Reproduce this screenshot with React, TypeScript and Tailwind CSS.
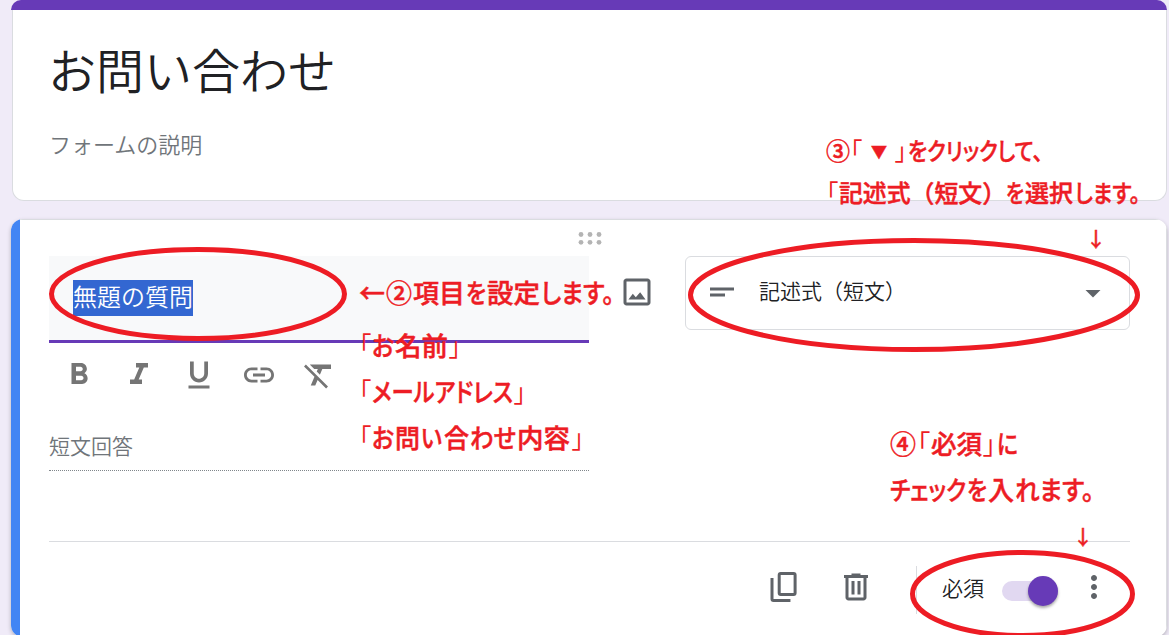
import { MdArrowDropDown, MdFormatBold, MdFormatClear, MdFormatItalic, MdFormatUnderlined, MdInsertLink, MdMoreVert, MdShortText } from 'react-icons/md'

const toolbar = [MdFormatBold, MdFormatItalic, MdFormatUnderlined, MdInsertLink, MdFormatClear]

type Run = { text: string; x: number; width: number; thin?: boolean; size?: number; wide?: boolean }

// Red guide notes, one entry per line, each run fitted to its own width
const notes: { baseline: number; size: number; runs: Run[] }[] = [
  {
    baseline: 160,
    size: 24,
    runs: [
      { text: '③', x: 826, width: 24 },
      { text: '「', x: 850, width: 12, thin: true },
      { text: '▼', x: 871, width: 16, size: 16 },
      { text: '」', x: 895, width: 12, thin: true },
      { text: 'をクリックして、', x: 908, width: 135 },
    ],
  },
  {
    baseline: 201.5,
    size: 24,
    runs: [
      { text: '「', x: 826, width: 12, thin: true },
      { text: '記述式（短文）', x: 839, width: 167, wide: true },
      { text: 'を', x: 1006, width: 18 },
      { text: '選択', x: 1025, width: 48 },
      { text: 'します。', x: 1075, width: 65 },
    ],
  },
  {
    baseline: 302.5,
    size: 26,
    runs: [
      { text: '←', x: 359, width: 26 },
      { text: '②', x: 386, width: 26 },
      { text: '項目', x: 413, width: 52 },
      { text: 'を', x: 466, width: 20 },
      { text: '設定', x: 487, width: 53 },
      { text: 'します。', x: 541, width: 73 },
    ],
  },
  {
    baseline: 355.5,
    size: 26,
    runs: [
      { text: '「', x: 359, width: 12, thin: true },
      { text: 'お', x: 372, width: 22 },
      { text: '名前', x: 395, width: 53 },
      { text: '」', x: 449, width: 12, thin: true },
    ],
  },
  {
    baseline: 401.5,
    size: 26,
    runs: [
      { text: '「', x: 359, width: 12, thin: true },
      { text: 'メールアドレス', x: 372, width: 141 },
      { text: '」', x: 514, width: 12, thin: true },
    ],
  },
  {
    baseline: 447.5,
    size: 26,
    runs: [
      { text: '「', x: 359, width: 12, thin: true },
      { text: 'お', x: 372, width: 22 },
      { text: '問', x: 395, width: 25 },
      { text: 'い', x: 421, width: 21 },
      { text: '合', x: 444, width: 25 },
      { text: 'わせ', x: 470, width: 46 },
      { text: '内容', x: 517, width: 53 },
      { text: '」', x: 572, width: 12, thin: true },
    ],
  },
  {
    baseline: 453.5,
    size: 26,
    runs: [
      { text: '④', x: 890, width: 26 },
      { text: '「', x: 917, width: 13, thin: true },
      { text: '必須', x: 931, width: 51 },
      { text: '」', x: 983, width: 13, thin: true },
      { text: 'に', x: 997, width: 21 },
    ],
  },
  {
    baseline: 499.5,
    size: 26,
    runs: [
      { text: 'チェック', x: 890, width: 76 },
      { text: 'を', x: 967, width: 20 },
      { text: '入', x: 988, width: 26 },
      { text: 'れます。', x: 1015, width: 79 },
    ],
  },
  { baseline: 247, size: 20, runs: [{ text: '↓', x: 1086, width: 20 }] },
  { baseline: 545, size: 20, runs: [{ text: '↓', x: 1073, width: 20 }] },
]

function Annotations() {
  return (
    <svg className="pointer-events-none absolute inset-0" width="1169" height="635">
      <g fill="none" stroke="#ed1c24" strokeWidth="5">
        <ellipse cx="198" cy="294" rx="146.5" ry="44.5" />
        <ellipse cx="914" cy="295" rx="223.5" ry="54.5" />
        <ellipse cx="1022.5" cy="594" rx="110" ry="41.5" />
      </g>
      <g fill="#ed1c24" stroke="#ed1c24">
        {notes.map((note) =>
          note.runs.map((run) => (
            <text
              key={`${run.x}-${note.baseline}`}
              x={run.x}
              y={run.size ? note.baseline - 2 : note.baseline}
              textLength={run.width}
              lengthAdjust="spacingAndGlyphs"
              fontSize={run.size ?? note.size}
              fontWeight={run.thin ? 400 : 500}
              strokeWidth={run.thin ? 0 : 0.5}
              className={run.wide ? undefined : "[font-feature-settings:'palt']"}
            >
              {run.text}
            </text>
          )),
        )}
      </g>
    </svg>
  )
}

function DragHandle() {
  return (
    <svg width="24" height="13" viewBox="0 0 24 13" fill="#b4b4b4">
      {[3, 12, 21].map((x) => (
        <g key={x}>
          <circle cx={x} cy="2.5" r="2.4" />
          <circle cx={x} cy="10.3" r="2.4" />
        </g>
      ))}
    </svg>
  )
}

function ImageIcon() {
  return (
    <svg width="36" height="36" viewBox="0 0 24 24" fill="currentColor">
      <path d="M19 5v14H5V5h14m0-2H5c-1.1 0-2 .9-2 2v14c0 1.1.9 2 2 2h14c1.1 0 2-.9 2-2V5c0-1.1-.9-2-2-2z" />
      <path d="M6.3 17l2.9-3.9 2 2.4 2.9-3.3 3.6 4.8z" />
    </svg>
  )
}

function CopyIcon() {
  return (
    <svg width="36" height="36" viewBox="0 0 24 24" fill="none" stroke="currentColor" strokeWidth="2">
      <rect x="8.8" y="3" width="10.6" height="14" rx="1" />
      <path d="M4 6v14c0 .6.4 1 1 1h11.3" />
    </svg>
  )
}

function TrashIcon() {
  return (
    <svg width="36" height="36" viewBox="0 0 24 24" fill="currentColor">
      <path d="M15 4V3H9v1H4v2h1v13c0 1.1.9 2 2 2h10c1.1 0 2-.9 2-2V6h1V4h-5zm2 15H7V6h10v13zM9 8h2v9H9zm4 0h2v9h-2z" />
    </svg>
  )
}

export default function App() {
  return (
    <div className="relative flex h-[635px] w-[1169px] flex-col gap-[18px] overflow-hidden bg-[#f0ebf8] pr-[2px] pl-[11px] font-[Noto_Sans_CJK_JP,sans-serif] font-[350] text-[#202124]">
      <section className="h-[201px] shrink-0">
        <div className="h-[10px] rounded-t-xl bg-[#673ab7]" />
        <div className="ml-px h-[191px] rounded-b-xl border border-t-0 border-[#dadce0] bg-white pl-9">
          <h1 className="-ml-px pt-[23px] text-[48px] leading-[70px]">お問い合わせ</h1>
          <p className="mt-[24px] text-[22px] leading-8 text-[#70757a]">フォームの説明</p>
        </div>
      </section>

      <section className="flex h-[418px] shrink-0 overflow-hidden rounded-xl bg-white shadow-[0_2px_4px_rgba(0,0,0,0.25)]">
        <div className="w-[9px] shrink-0 bg-[#4285f4]" />
        <div className="flex flex-1 flex-col border-t border-r border-[#dadce0] pr-[36px] pl-[29px]">
          <div className="flex h-9 justify-center pt-[12px]">
            <DragHandle />
          </div>

          <div className="flex items-start">
            <div className="h-[87px] w-[540px] border-b-[3px] border-[#673ab7] bg-[#f8f9fa] pt-6 pl-6">
              <span className="inline-block h-9 bg-[#3367d1] text-[24px] leading-[31px] text-white">無題の質問</span>
            </div>
            <div className="mt-[18px] ml-[30px] text-[#5f6368]">
              <ImageIcon />
            </div>
            <div className="ml-[30px] flex h-[74px] w-[445px] items-center rounded-md border border-[#dadce0] px-[18px]">
              <MdShortText className="mb-0.5 size-9 text-[#5f6368]" />
              <span className="mb-[6px] ml-[19px] flex-1 text-[21px] leading-8">記述式（短文）</span>
              <MdArrowDropDown className="size-9 text-[#5f6368]" />
            </div>
          </div>

          <div className="mt-[14px] ml-[11.5px] flex gap-6 text-[#757575]">
            {toolbar.map((Icon, i) => (
              <Icon key={i} className="size-9" />
            ))}
          </div>

          <div className="mt-[36px] h-[42px] w-[540px] border-b border-dotted border-[#80868b] text-[21px] leading-8 text-[#70757a]">
            短文回答
          </div>

          <div className="mt-[70px] flex h-[91px] shrink-0 items-center border-t border-[#dadce0]">
            <div className="ml-[716.5px] flex gap-[36.5px] text-[#5f6368]">
              <CopyIcon />
              <TrashIcon />
            </div>
            <div className="mt-[5px] ml-[42px] h-12 w-px bg-[#dadce0]" />
            <span className="ml-[25px] text-[21px] leading-8">必須</span>
            <div className="mt-2 ml-[18px] flex h-5 w-[55.5px] items-center justify-end rounded-full bg-[#e1d8f1]">
              <div className="size-[30px] shrink-0 rounded-full bg-[#673ab7] shadow-[0_2px_3px_rgba(0,0,0,0.35)]" />
            </div>
            <MdMoreVert className="ml-[18.5px] size-9 text-[#5f6368]" />
          </div>
        </div>
      </section>

      <Annotations />
    </div>
  )
}
